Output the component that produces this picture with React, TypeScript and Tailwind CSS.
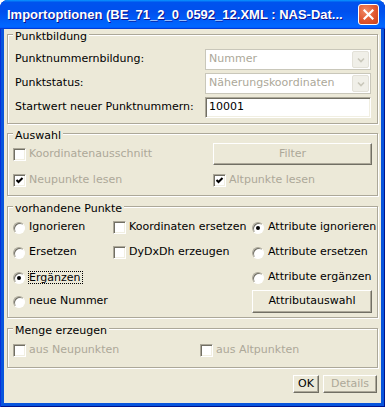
import type { ReactNode } from 'react';

const dis = 'text-[#ACA899]';

function GroupBox({ title, className, children }: { title: string; className?: string; children: ReactNode }) {
  return (
    <div className={`relative border border-[#ACA899] shadow-[inset_1px_1px_0_#fff,1px_1px_0_#fff] ${className ?? ''}`}>
      <span className="absolute left-[5px] -top-[5px] bg-[#ECE9D8] px-[2px] leading-[13px]">{title}</span>
      {children}
    </div>
  );
}

function Combo({ value }: { value: string }) {
  return (
    <div className="w-[166px] h-[21px] border border-[#C9C7BA] bg-white flex items-center">
      <span className={`flex-1 pl-[3px] ${dis}`}>{value}</span>
      <div className="w-[17px] h-[17px] mr-[1px] rounded-[2px] bg-[#F0EFE8] border border-[#E3E1D8] flex items-center justify-center">
        <svg width="8" height="6" viewBox="0 0 8 6">
          <path d="M1 1.5 L4 4.5 L7 1.5" fill="none" stroke="#C9C7BA" strokeWidth="1.6" />
        </svg>
      </div>
    </div>
  );
}

function Button({ label, disabled, className }: { label: string; disabled?: boolean; className?: string }) {
  return (
    <div
      className={`flex items-center justify-center bg-[#ECE9D8] border border-t-white border-l-white border-r-[#716F64] border-b-[#716F64] shadow-[inset_-1px_-1px_0_#ACA899] ${disabled ? dis : 'text-black'} ${className ?? ''}`}
    >
      {label}
    </div>
  );
}

function Check({ label, checked, disabled }: { label: string; checked?: boolean; disabled?: boolean }) {
  return (
    <div className="flex items-center whitespace-nowrap">
      <div className="w-[13px] h-[13px] shrink-0 bg-white border border-t-[#ACA899] border-l-[#ACA899] border-r-white border-b-white shadow-[inset_1px_1px_0_#716F64,inset_-1px_-1px_0_#F1EFE2] flex items-center justify-center">
        {checked && (
          <svg width="9" height="9" viewBox="0 0 9 9">
            <path d="M1.5 4 L3.5 6 L7.5 2" fill="none" stroke="#000" strokeWidth="2" />
          </svg>
        )}
      </div>
      <span className={`ml-[3px] ${disabled ? dis : 'text-black'}`}>{label}</span>
    </div>
  );
}

function Radio({ label, checked, focused }: { label: string; checked?: boolean; focused?: boolean }) {
  return (
    <div className="flex items-center whitespace-nowrap">
      <div className="w-[12px] h-[12px] shrink-0 rounded-full bg-white border border-t-[#ACA899] border-l-[#ACA899] border-r-white border-b-white shadow-[inset_1px_1px_0_#716F64] flex items-center justify-center">
        {checked && <div className="w-[4px] h-[4px] rounded-full bg-black" />}
      </div>
      {focused ? (
        <span className="ml-[3px] border border-dotted border-black leading-[11px] pr-[1px]">{label}</span>
      ) : (
        <span className="ml-[4px]">{label}</span>
      )}
    </div>
  );
}

function Row({ label, children }: { label: string; children: ReactNode }) {
  return (
    <div className="flex items-center justify-between h-[21px]">
      <span>{label}</span>
      {children}
    </div>
  );
}

export default function App() {
  return (
    <div className="w-[385px] h-[407px] flex flex-col rounded-t-[8px] overflow-hidden bg-[#0855DD] shadow-[inset_1px_0_0_#0831D9,inset_-1px_-1px_0_#00138C] font-['DejaVu_Sans',sans-serif] text-[11px] text-black">
      {/* Title bar */}
      <div className="h-[29px] shrink-0 flex items-center pl-[7px] pr-[6px] bg-[linear-gradient(180deg,#0997ff,#0053ee_8%,#0050ee_40%,#06f_88%,#06f_93%,#005bff_95%,#003dd7_96%,#003dd7)]">
        <span className="flex-1 pt-[1px] text-white font-bold text-[13px] font-['Liberation_Sans',sans-serif] whitespace-nowrap [text-shadow:1px_1px_#0F1089]">
          Importoptionen (BE_71_2_0_0592_12.XML : NAS-Dat...
        </span>
        <div className="w-[21px] h-[21px] ml-[4px] rounded-[3px] border border-white bg-[radial-gradient(circle_at_35%_30%,#F08A66,#E0562F_55%,#C8421C)] flex items-center justify-center">
          <svg width="11" height="11" viewBox="0 0 11 11">
            <path d="M1.5 1.5 L9.5 9.5 M9.5 1.5 L1.5 9.5" stroke="#fff" strokeWidth="2.2" strokeLinecap="square" />
          </svg>
        </div>
      </div>

      {/* Client area */}
      <div className="flex-1 mx-[4px] mb-[4px] bg-[#ECE9D8] px-[3px] pt-[5px] flex flex-col">
        <GroupBox title="Punktbildung" className="pt-[14px] pb-[5px] pl-[7px] pr-[6px] flex flex-col gap-[3px]">
          <Row label="Punktnummernbildung:">
            <Combo value="Nummer" />
          </Row>
          <Row label="Punktstatus:">
            <Combo value="Näherungskoordinaten" />
          </Row>
          <Row label="Startwert neuer Punktnummern:">
            <div className="w-[166px] h-[21px] bg-white border border-t-[#ACA899] border-l-[#ACA899] border-r-white border-b-white shadow-[inset_1px_1px_0_#716F64,inset_-1px_-1px_0_#F1EFE2] pl-[3px] flex items-center">
              10001
            </div>
          </Row>
        </GroupBox>

        <GroupBox title="Auswahl" className="mt-[9px] pt-[9px] pb-[7px] px-[5px]">
          <div className="grid grid-cols-[200px_1fr] items-center h-[22px]">
            <Check label="Koordinatenausschnitt" disabled />
            <Button label="Filter" disabled className="h-[22px]" />
          </div>
          <div className="grid grid-cols-[200px_1fr] items-center h-[16px] mt-[7px]">
            <Check label="Neupunkte lesen" checked disabled />
            <Check label="Altpunkte lesen" checked disabled />
          </div>
        </GroupBox>

        <GroupBox title="vorhandene Punkte" className="mt-[10px] pt-[8px] pb-[4px] px-[5px]">
          <div className="grid grid-cols-[100px_139px_120px] grid-rows-[25px_25px_25px_23px] items-center">
            <Radio label="Ignorieren" />
            <Check label="Koordinaten ersetzen" />
            <Radio label="Attribute ignorieren" checked />
            <Radio label="Ersetzen" />
            <Check label="DyDxDh erzeugen" />
            <Radio label="Attribute ersetzen" />
            <Radio label="Ergänzen" checked focused />
            <div />
            <Radio label="Attribute ergänzen" />
            <Radio label="neue Nummer" />
            <div />
            <Button label="Attributauswahl" className="h-[23px]" />
          </div>
        </GroupBox>

        <GroupBox title="Menge erzeugen" className="mt-[10px] pt-[13px] pb-[9px] px-[5px]">
          <div className="grid grid-cols-[187px_1fr] items-center h-[16px]">
            <Check label="aus Neupunkten" disabled />
            <Check label="aus Altpunkten" disabled />
          </div>
        </GroupBox>

        <div className="mt-[7px] mr-[1px] flex justify-end gap-[4px]">
          <Button label="OK" className="w-[26px] h-[18px]" />
          <Button label="Details" disabled className="w-[54px] h-[18px]" />
        </div>
      </div>
    </div>
  );
}
